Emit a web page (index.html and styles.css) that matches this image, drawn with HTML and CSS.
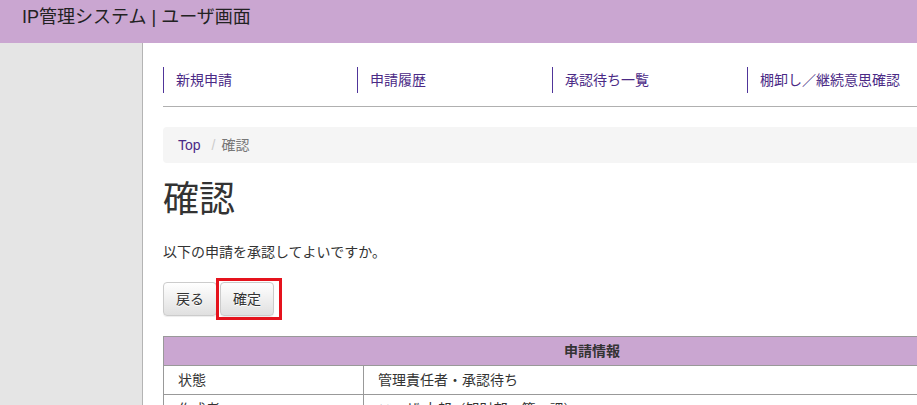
FILE: index.html
```html
<!DOCTYPE html>
<html lang="ja">
<head>
<meta charset="utf-8">
<title>IP管理システム | ユーザ画面</title>
<link rel="stylesheet" href="styles.css">
</head>
<body>
<header class="header">
  <div class="brand">IP管理システム | ユーザ画面</div>
</header>
<div class="layout">
  <aside class="sidebar"></aside>
  <main class="main">
    <nav class="nav">
      <a class="nav-item" href="#">新規申請</a>
      <a class="nav-item" href="#">申請履歴</a>
      <a class="nav-item" href="#">承認待ち一覧</a>
      <a class="nav-item" href="#">棚卸し／継続意思確認</a>
    </nav>
    <ol class="breadcrumb">
      <li><a href="#">Top</a></li>
      <li class="sep">/</li>
      <li class="active">確認</li>
    </ol>
    <h1 class="title">確認</h1>
    <p class="lead">以下の申請を承認してよいですか。</p>
    <div class="actions">
      <button class="btn" type="button">戻る</button>
      <span class="highlight"><button class="btn" type="button">確定</button></span>
    </div>
    <table class="info">
      <thead>
        <tr><th colspan="2">申請情報</th></tr>
      </thead>
      <tbody>
        <tr><td class="label">状態</td><td>管理責任者・承認待ち</td></tr>
        <tr><td class="label">作成者</td><td>ユーザ 太郎（知財部・第一課）</td></tr>
      </tbody>
    </table>
  </main>
</div>
</body>
</html>
```
FILE: styles.css
```css
html, body {
  margin: 0;
  padding: 0;
}
body {
  font-family: "Liberation Sans", "Noto Sans CJK JP", sans-serif;
  font-size: 14px;
  line-height: 20px;
  color: #333;
  background: #fff;
  overflow: hidden;
  width: 917px;
  height: 405px;
}
.header {
  height: 43px;
  background: #caa6d1;
  padding: 7px 0 0 22px;
  box-sizing: border-box;
}
.brand {
  font-size: 18px;
  line-height: 20px;
  color: #222;
}
.layout {
  display: flex;
  height: 362px;
}
.sidebar {
  width: 142px;
  flex-shrink: 0;
  background: #e5e5e5;
  border-right: 1px solid #b4b4b4;
}
.main {
  flex-shrink: 0;
  width: 858px;
  padding-left: 20px;
}
.nav {
  display: flex;
  padding-top: 24px;
  padding-bottom: 13px;
  border-bottom: 1px solid #b0b0b0;
}
.nav-item {
  flex-shrink: 0;
  border-left: 1px solid #50359a;
  padding: 3px 12px;
  line-height: 20px;
  color: #4b2a86;
  text-decoration: none;
  box-sizing: border-box;
  width: 195px;
}
.nav-item:first-child {
  width: 194px;
}
.breadcrumb {
  list-style: none;
  margin: 20px 0 0;
  padding: 8px 15px;
  height: 36px;
  box-sizing: border-box;
  background: #f5f5f5;
  border-radius: 4px;
  display: flex;
}
.breadcrumb a {
  color: #4b2a86;
  text-decoration: none;
}
.breadcrumb .sep {
  color: #ccc;
  padding: 0 6px 0 11px;
}
.breadcrumb .active {
  color: #777;
}
.title {
  font-size: 36px;
  font-weight: normal;
  line-height: 40px;
  margin: 17px 0 0;
  color: #333;
}
.lead {
  margin: 22px 0 0;
}
.actions {
  margin-top: 20px;
  display: flex;
  gap: 3px;
}
.btn {
  font-family: inherit;
  font-size: 14px;
  line-height: 20px;
  padding: 6px 12px;
  color: #333;
  border: 1px solid #ccc;
  border-radius: 4px;
  background: linear-gradient(to bottom, #fff 0, #e0e0e0 100%);
  text-shadow: 0 1px 0 #fff;
  box-shadow: inset 0 1px 0 rgba(255,255,255,.15), 0 1px 1px rgba(0,0,0,.075);
  height: 34px;
  cursor: pointer;
}
.highlight {
  position: relative;
  display: inline-block;
}
.highlight::after {
  content: "";
  position: absolute;
  left: -4px;
  top: -4px;
  right: -8px;
  bottom: -4px;
  border: 3px solid #e5131d;
  pointer-events: none;
}
.info {
  margin-top: 20px;
  width: 858px;
  border-collapse: collapse;
  border: 1px solid #999;
}
.info th {
  background: #caa6d1;
  font-weight: bold;
  text-align: center;
  padding: 4px 14px;
  border: 1px solid #999;
  color: #333;
}
.info td {
  padding: 4px 14px;
  border: 1px solid #999;
  text-align: left;
}
.info td.label {
  width: 171px;
}
```
